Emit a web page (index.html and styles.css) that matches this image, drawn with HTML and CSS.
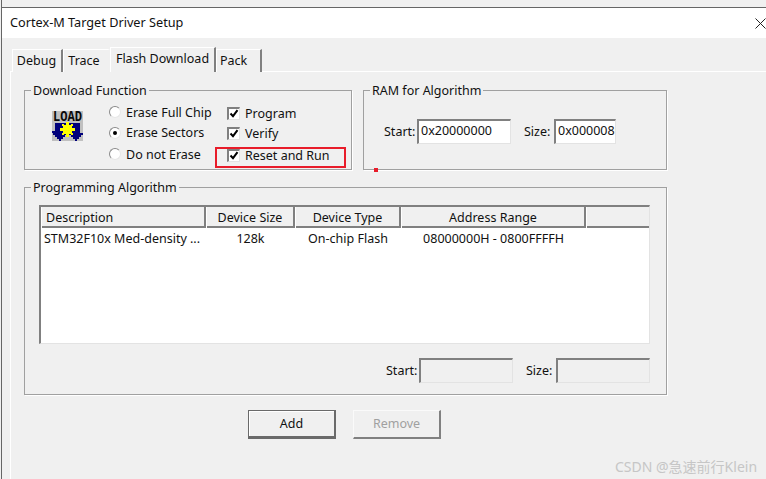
FILE: index.html
```html
<!DOCTYPE html>
<html lang="en">
<head>
<meta charset="utf-8">
<title>Cortex-M Target Driver Setup</title>
<link rel="stylesheet" href="styles.css">
</head>
<body>
<div class="window">
  <div class="topstrip"></div>
  <header class="titlebar">
    <span>Cortex-M Target Driver Setup</span>
    <svg class="close" width="11" height="11" viewBox="0 0 11 11"><path d="M.5.5l10 10M10.5.5l-10 10" stroke="#222" fill="none"/></svg>
  </header>
  <nav class="tabs">
    <div class="tab t-debug">Debug</div>
    <div class="tab t-trace">Trace</div>
    <div class="tab t-flash">Flash Download</div>
    <div class="tab t-pack">Pack</div>
  </nav>
  <main class="panel">
    <div class="row-top">
      <section class="group g-download">
        <div class="legend">Download Function</div>
        <svg class="load" width="31" height="30" viewBox="0 0 31 30" shape-rendering="crispEdges">
          <rect width="31" height="30" fill="#c0c0c0"/>
          <text x="1" y="9.5" class="load-text" textLength="29" lengthAdjust="spacingAndGlyphs">LOAD</text>
          <path fill="#00007b" d="M3 12h25v10h3v2h-2v2h-2v2h-2v2h-2v-2h-2v-2h-2v-2h-2v-2h-2v2h-2v2h-2v2h-2v2H7v-2H5v-2H3v-2H1v-2H0v-2h3z"/>
          <path fill="#ff0" d="M14 11h3v3h2v-1h2v2h-1v2h3v3h-3v2h1v2h-2v-1h-2v3h-3v-3h-2v1h-2v-2h1v-2H8v-3h3v-2h-1v-2h2v1h2z"/>
        </svg>
        <div class="opts radios">
          <label class="opt"><span class="radio"></span>Erase Full Chip</label>
          <label class="opt"><span class="radio on"></span>Erase Sectors</label>
          <label class="opt"><span class="radio"></span>Do not Erase</label>
        </div>
        <div class="opts checks">
          <label class="opt"><span class="check"><svg width="10" height="10" viewBox="0 0 10 10"><path d="M1.5 4.5l2.5 2.7 4.5-6" stroke="#000" stroke-width="2" fill="none"/></svg></span>Program</label>
          <label class="opt"><span class="check"><svg width="10" height="10" viewBox="0 0 10 10"><path d="M1.5 4.5l2.5 2.7 4.5-6" stroke="#000" stroke-width="2" fill="none"/></svg></span>Verify</label>
          <label class="opt"><span class="check"><svg width="10" height="10" viewBox="0 0 10 10"><path d="M1.5 4.5l2.5 2.7 4.5-6" stroke="#000" stroke-width="2" fill="none"/></svg></span>Reset and Run</label>
        </div>
        <div class="redbox"></div>
      </section>
      <section class="group g-ram">
        <div class="legend">RAM for Algorithm</div>
        <span class="lbl l-start">Start:</span>
        <div class="field f-start">0x20000000</div>
        <span class="lbl l-size">Size:</span>
        <div class="field f-size">0x00000800</div>
        <div class="reddot"></div>
      </section>
    </div>
    <section class="group g-algo">
      <div class="legend">Programming Algorithm</div>
      <div class="list">
        <div class="cols head">
          <div class="th left">Description</div>
          <div class="th">Device Size</div>
          <div class="th">Device Type</div>
          <div class="th">Address Range</div>
          <div class="th"></div>
        </div>
        <div class="cols body-row">
          <div class="td left">STM32F10x Med-density ...</div>
          <div class="td">128k</div>
          <div class="td">On-chip Flash</div>
          <div class="td">08000000H - 0800FFFFH</div>
          <div class="td"></div>
        </div>
      </div>
      <div class="range">
        <span class="lbl l-start2">Start:</span>
        <div class="field disabled"></div>
        <span class="lbl l-size2">Size:</span>
        <div class="field disabled"></div>
      </div>
    </section>
    <div class="buttons">
      <button class="btn primary" type="button">Add</button>
      <button class="btn off" type="button">Remove</button>
    </div>
  </main>
  <div class="watermark">CSDN @急速前行Klein</div>
</div>
</body>
</html>
```
FILE: styles.css
```css
* { box-sizing: border-box; }
html, body { margin: 0; padding: 0; }
body {
  width: 766px; height: 479px; overflow: hidden; background: #f0f0f0;
  font: 12.5px "Noto Sans", "Noto Sans CJK SC", sans-serif; color: #111;
}
.window {
  position: relative; width: 766px; height: 479px; overflow: hidden;
  display: flex; flex-direction: column;
  margin-left: 1px; border-left: 1px solid #666;
}
.topstrip { height: 8px; flex: none; margin-left: -1px; border-bottom: 1px solid #666; background: #f0f0f0; }
.titlebar {
  height: 30px; flex: none; background: #fff; display: flex; align-items: center;
  justify-content: space-between; padding: 0 1px 3px 8px; width: 764px; font-size: 12.7px;
}
.close { margin: 3px -1px 0 0; }
.tabs { display: flex; align-items: flex-end; height: 34px; flex: none; padding: 9px 0 0 10px; position: relative; z-index: 1; }
.tab {
  height: 23px; line-height: 22px; background: #f0f0f0; text-align: center;
  border-top: 1px solid #fff; border-left: 1px solid #fff; border-right: 2px solid #808080;
}
.t-debug { width: 51px; padding-right: 1px; }
.t-trace { width: 47px; border-right-color: #f0f0f0; padding-right: 4px; }
.t-flash { width: 106px; height: 25px; line-height: 21px; }
.t-pack { width: 46px; text-align: left; padding-left: 3px; }
.panel {
  flex: 1; margin: -1px 0 0 8px; border-top: 1px solid #fff; border-left: 1px solid #fff;
  padding: 18px 0 0 13px;
}
.row-top { display: flex; gap: 11px; }
.group { position: relative; border: 1px solid #a0a0a0; box-shadow: 1px 1px 0 #fff; }
.legend {
  position: absolute; left: 6px; top: -8px; height: 16px; line-height: 16px;
  padding: 0 2px; background: #f0f0f0;
}
.g-download { width: 328px; height: 80px; display: flex; padding: 20px 0 0 27px; }
.load { flex: none; }
.load-text { font: bold 14px "Liberation Mono", monospace; fill: #0a0a0a; }
.opts { display: grid; align-content: start; grid-template-rows: 20px 21px 22px; }
.opt { display: flex; align-items: center; white-space: nowrap; }
.radios { margin: -9px 0 0 26px; width: 118px; }
.checks { margin-top: -8px; }
.radio {
  width: 12px; height: 12px; border-radius: 50%; margin-right: 5px; flex: none; background: #fff;
  border: 1.5px solid; border-color: #8a8a8a #e6e6e6 #e6e6e6 #8a8a8a;
  display: flex; align-items: center; justify-content: center;
}
.radio.on::after { content: ""; width: 4px; height: 4px; border-radius: 50%; background: #000; }
.check {
  width: 13px; height: 13px; flex: none; margin-right: 5px; background: #fff;
  border-style: solid; border-width: 2px 1px 1px 2px; border-color: #808080 #e3e3e3 #e3e3e3 #808080;
  display: flex;
}
.check svg { display: block; margin-left: -0.5px; }
.redbox { position: absolute; left: 190px; top: 56px; width: 131px; height: 21px; border: 2px solid #e81c2a; }
.g-ram { width: 304px; height: 80px; display: flex; align-items: center; padding: 2px 0 0 20px; }
.lbl { flex: none; }
.l-start { width: 30px; }
.field {
  flex: none; height: 25px; line-height: 20px; padding: 0 2px; overflow: hidden; white-space: nowrap;
  background: #fff; border-style: solid; border-width: 2px 1px 1px 2px;
  border-color: #808080 #e3e3e3 #e3e3e3 #808080;
}
.f-start { width: 94px; margin-left: 3px; }
.l-size { margin-left: 13px; width: 26px; }
.f-size { width: 62px; margin-left: 4px; }
.reddot { position: absolute; left: 10px; bottom: -3px; width: 4px; height: 4px; background: #e81c2a; }
.g-algo { width: 643px; height: 208px; margin-top: 17px; padding: 17px 0 0 14px; }
.list {
  width: 611px; height: 139px; background: #fff; border-style: solid; border-width: 2px 1px 1px 2px;
  border-color: #808080 #e3e3e3 #e3e3e3 #808080;
}
.cols { display: grid; grid-template-columns: 165px 89px 106px 185px 62px; }
.head { height: 21px; background: #f0f0f0; border-bottom: 2px solid #808080; }
.th { text-align: center; line-height: 21px; border-right: 2px solid #808080; border-left: 1px solid #fff; }
.th:last-child { border-right: 0; }
.th.left { text-align: left; padding-left: 4px; }
.td { text-align: center; line-height: 21px; white-space: nowrap; }
.td.left { text-align: left; padding-left: 3px; }
.range { display: flex; align-items: center; margin-top: 14px; padding-left: 347px; }
.l-start2 { width: 33px; }
.disabled { width: 94px; background: #f0f0f0; }
.l-size2 { margin-left: 13px; width: 30px; }
.buttons { display: flex; gap: 17px; padding: 15px 0 0 224px; }
.btn {
  width: 88px; height: 29px; padding: 0; font: inherit; color: #111; background: #f0f0f0;
}
.primary {
  border-style: solid; border-color: #6a6a6a; border-width: 1px 2px 3px 1px;
  box-shadow: inset 1px 1px 0 #fff;
}
.off {
  color: #a0a0a0; border-style: solid; border-width: 1px 2px 2px 1px; padding-bottom: 1px;
  border-color: #fafafa #808080 #808080 #fafafa;
}
.watermark {
  position: absolute; left: 613px; top: 456px; color: #c6c6c6; font-size: 14px; white-space: nowrap;
}
```
